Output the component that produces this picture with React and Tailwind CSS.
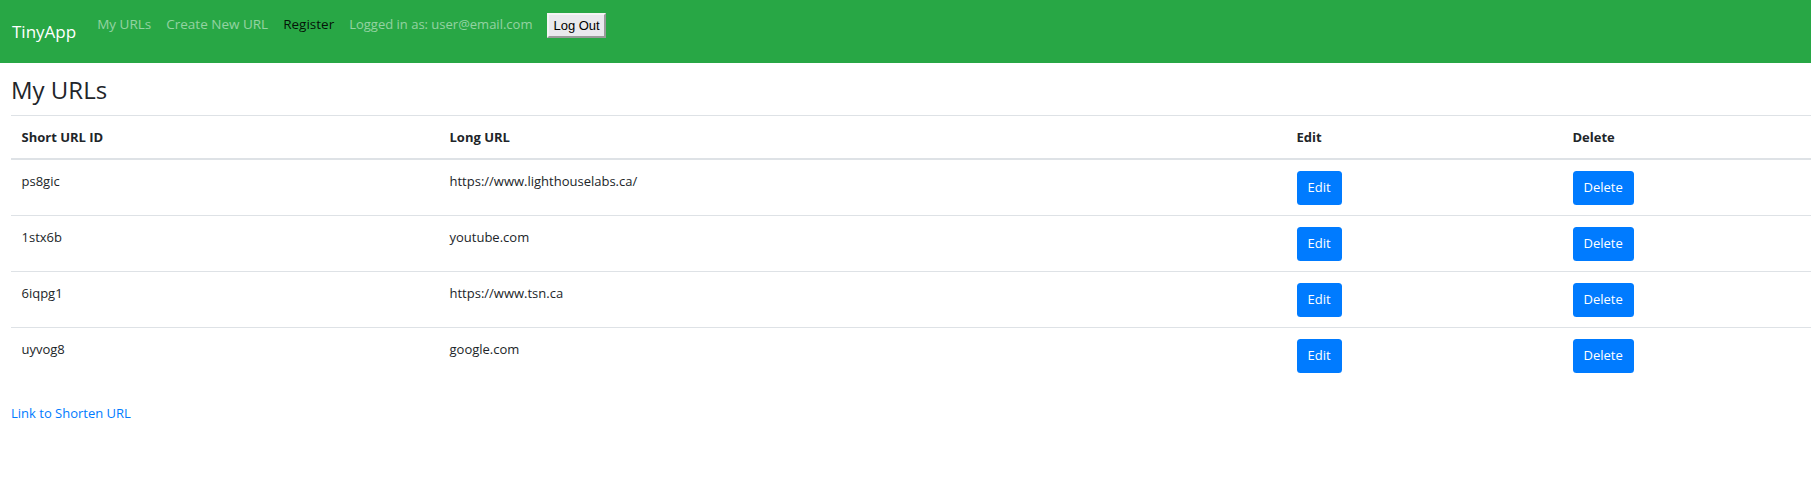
const urls = [
  { id: "ps8gic", long: "https://www.lighthouselabs.ca/" },
  { id: "1stx6b", long: "youtube.com" },
  { id: "6iqpg1", long: "https://www.tsn.ca" },
  { id: "uyvog8", long: "google.com" },
];

export default function App() {
  return (
    <div className="min-h-[491px] bg-white text-[13px] text-[#212529] font-['Open_Sans',sans-serif]">
      {/* Navbar */}
      <nav className="flex h-[63px] items-start bg-[#28a745] pl-[12px]">
        <span className="mt-[19px] mr-[21px] text-[17px] leading-[26px] text-white">
          TinyApp
        </span>
        <div className="mt-[12px] flex items-start gap-[15px] text-[13.5px] leading-[24px]">
          <a className="text-white/50" href="#">
            My URLs
          </a>
          <a className="text-white/50" href="#">
            Create New URL
          </a>
          <a className="text-black/90" href="#">
            Register
          </a>
          <span className="text-[13px] text-white/50">
            Logged in as: user@email.com
          </span>
          <button className="mt-[1px] h-[25px] border-2 border-t-[#f4f4f4] border-l-[#f4f4f4] border-r-[#9a9a9a] border-b-[#9a9a9a] bg-[#e9e9ed] px-[4px] font-['Liberation_Sans',sans-serif] text-[13px] leading-[20px] text-black">
            Log Out
          </button>
        </div>
      </nav>

      <main className="pl-[11px]">
        <h2 className="mt-[10px] mb-[8px] text-[24px] leading-[34px] font-normal">
          My URLs
        </h2>
        <table className="w-full border-collapse text-left">
          <thead>
            <tr>
              <th className="w-[428px] border-t border-b-2 border-[#dee2e6] px-[10.5px] py-[10.5px] font-bold leading-[21px]">
                Short URL ID
              </th>
              <th className="w-[847px] border-t border-b-2 border-[#dee2e6] px-[10.5px] py-[10.5px] font-bold leading-[21px]">
                Long URL
              </th>
              <th className="w-[276px] border-t border-b-2 border-[#dee2e6] px-[10.5px] py-[10.5px] font-bold leading-[21px]">
                Edit
              </th>
              <th className="border-t border-b-2 border-[#dee2e6] px-[10.5px] py-[10.5px] font-bold leading-[21px]">
                Delete
              </th>
            </tr>
          </thead>
          <tbody>
            {urls.map((u, i) => (
              <tr key={u.id}>
                <td
                  className={`px-[10.5px] py-[10.5px] align-top leading-[21px] ${
                    i > 0 ? "border-t border-[#dee2e6]" : ""
                  }`}
                >
                  {u.id}
                </td>
                <td
                  className={`px-[10.5px] py-[10.5px] align-top leading-[21px] ${
                    i > 0 ? "border-t border-[#dee2e6]" : ""
                  }`}
                >
                  {u.long}
                </td>
                <td
                  className={`px-[10.5px] py-[10.5px] align-top ${
                    i > 0 ? "border-t border-[#dee2e6]" : ""
                  }`}
                >
                  <button className="h-[34px] rounded-[3.5px] bg-[#007bff] px-[11px] text-[13px] leading-[21px] text-white">
                    Edit
                  </button>
                </td>
                <td
                  className={`px-[10.5px] py-[10.5px] align-top ${
                    i > 0 ? "border-t border-[#dee2e6]" : ""
                  }`}
                >
                  <button className="h-[34px] rounded-[3.5px] bg-[#007bff] px-[11px] text-[13px] leading-[21px] text-white">
                    Delete
                  </button>
                </td>
              </tr>
            ))}
          </tbody>
        </table>
        <a className="mt-[20px] block leading-[21px] text-[#007bff]" href="#">
          Link to Shorten URL
        </a>
      </main>
    </div>
  );
}
